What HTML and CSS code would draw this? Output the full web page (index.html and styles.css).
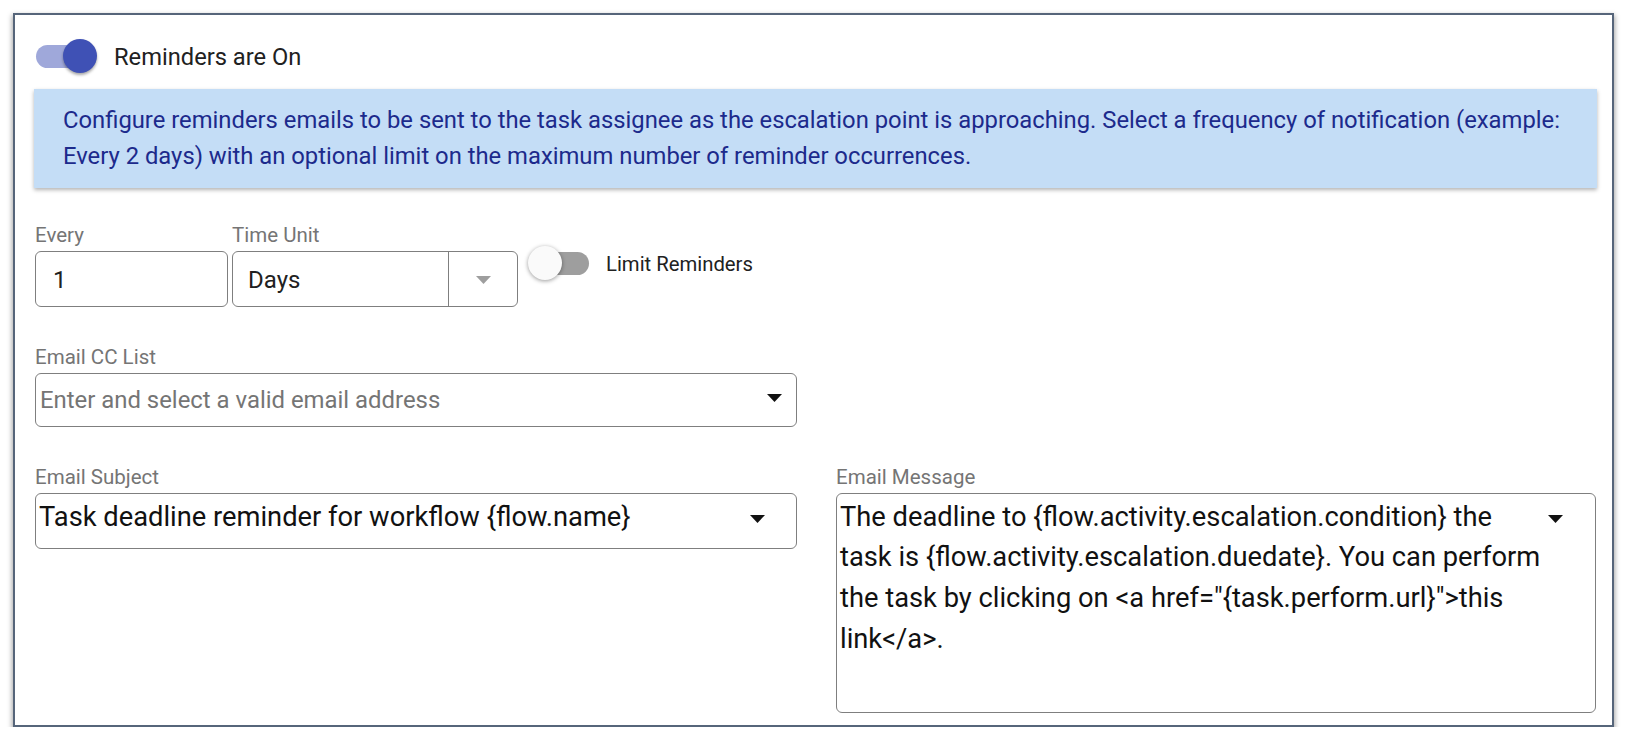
FILE: index.html
```html
<!DOCTYPE html>
<html>
<head>
<meta charset="utf-8">
<link rel="stylesheet" href="styles.css">
</head>
<body>
<div class="panel">
  <div class="master">
    <span class="switch switch-on"><span class="track"></span><span class="thumb"></span></span>
    <span class="master-label">Reminders are On</span>
  </div>
  <div class="info">Configure reminders emails to be sent to the task assignee as the escalation point is approaching. Select a frequency of notification (example:<br>Every 2 days) with an optional limit on the maximum number of reminder occurrences.</div>

  <div class="row-freq">
    <div class="field f-every">
      <div class="label">Every</div>
      <div class="box box-every">1</div>
    </div>
    <div class="field f-unit">
      <div class="label">Time Unit</div>
      <div class="box box-unit">
        <span class="unit-value">Days</span>
        <span class="unit-caret"><svg width="15" height="8" viewBox="0 0 15 8"><polygon points="0,0 15,0 7.5,8" fill="#9e9e9e"/></svg></span>
      </div>
    </div>
    <div class="limit">
      <span class="switch switch-off"><span class="track"></span><span class="thumb"></span></span>
      <span class="limit-label">Limit Reminders</span>
    </div>
  </div>

  <div class="field f-cc">
    <div class="label">Email CC List</div>
    <div class="box box-cc">
      <span class="placeholder">Enter and select a valid email address</span>
      <svg class="caret caret-cc" width="15" height="8" viewBox="0 0 15 8"><polygon points="0,0 15,0 7.5,8" fill="#111"/></svg>
    </div>
  </div>

  <div class="row-email">
    <div class="field f-subject">
      <div class="label">Email Subject</div>
      <div class="box box-text box-subject">
        <span class="text">Task deadline reminder for workflow {flow.name}</span>
        <svg class="caret caret-subject" width="15" height="8" viewBox="0 0 15 8"><polygon points="0,0 15,0 7.5,8" fill="#111"/></svg>
      </div>
    </div>
    <div class="field f-message">
      <div class="label">Email Message</div>
      <div class="box box-text box-message">
        <span class="text">The deadline to {flow.activity.escalation.condition} the<br>task is {flow.activity.escalation.duedate}. You can perform<br>the task by clicking on &lt;a href="{task.perform.url}"&gt;this<br>link&lt;/a&gt;.</span>
        <svg class="caret caret-message" width="15" height="8" viewBox="0 0 15 8"><polygon points="0,0 15,0 7.5,8" fill="#111"/></svg>
      </div>
    </div>
  </div>
</div>
</body>
</html>
```

FILE: styles.css
```css
* { box-sizing: border-box; }

body {
  margin: 0;
  background: #ffffff;
  font-family: Roboto, "Noto Sans", "Liberation Sans", sans-serif;
  color: #212121;
}

.panel {
  margin: 13px 0 0 13px;
  width: 1601px;
  border: 2px solid #56657a;
  background: #fff;
  box-shadow: 0 3px 5px 1px rgba(0, 0, 0, 0.35);
  padding: 0 15px 12px 20px;
}

/* master toggle */
.master {
  margin-top: 24px;
  height: 34px;
  display: flex;
  align-items: center;
}

.switch {
  position: relative;
  display: inline-block;
  width: 62px;
  height: 34px;
  flex: none;
}

.switch .track {
  position: absolute;
  top: 6px;
  height: 23px;
  border-radius: 12px;
}

.switch .thumb {
  position: absolute;
  top: 0;
  width: 34px;
  height: 34px;
  border-radius: 50%;
}

.switch-on .track { left: 1px; width: 56px; background: #9fa8da; }
.switch-on .thumb {
  left: 28px;
  background: #3f51b5;
  box-shadow: 0 2px 3px rgba(0, 0, 0, 0.35);
}

.switch-off .track { left: 8px; width: 53px; background: #9e9e9e; }
.switch-off .thumb {
  left: 0;
  background: #fafafa;
  box-shadow: 0 1px 4px rgba(0, 0, 0, 0.4);
}

.master-label {
  margin-left: 17px;
  margin-top: 2px;
  font-size: 23.7px;
  color: #212121;
}

/* info banner */
.info {
  margin-top: 16px;
  margin-left: -1px;
  height: 99px;
  background: #c4ddf6;
  color: #1c2a8c;
  font-size: 23.8px;
  line-height: 36px;
  padding: 13px 10px 0 29px;
  box-shadow: 0 2px 4px rgba(0, 0, 0, 0.3);
  white-space: nowrap;
}

/* fields */
.label {
  font-size: 20.5px;
  line-height: 24px;
  color: #757575;
  margin-bottom: 4px;
  white-space: nowrap;
}

.box {
  border: 1.5px solid #7f7f7f;
  border-radius: 6px;
  background: #fff;
}

.row-freq {
  margin-top: 35px;
  display: flex;
  align-items: flex-start;
}

.f-every { width: 193px; }
.f-unit { width: 286px; margin-left: 4px; }

.box-every {
  height: 56px;
  display: flex;
  align-items: center;
  padding: 1px 0 0 17px;
  font-size: 24px;
}

.box-unit {
  height: 56px;
  display: flex;
  align-items: stretch;
}

.unit-value {
  flex: 1;
  display: flex;
  align-items: center;
  padding: 1px 0 0 15px;
  font-size: 24px;
  border-right: 1.5px solid #7f7f7f;
}

.unit-caret {
  width: 68px;
  display: flex;
  align-items: center;
  justify-content: center;
  padding-top: 1px;
}

.limit {
  margin-top: 23px;
  margin-left: 10px;
  display: flex;
  align-items: flex-start;
}

.limit-label {
  margin-left: 16px;
  margin-top: 6px;
  font-size: 20.3px;
  line-height: 24px;
  color: #212121;
}

.f-cc {
  margin-top: 38px;
  width: 762px;
}

.box-cc {
  height: 54px;
  display: flex;
  align-items: center;
  padding-left: 4px;
}

.placeholder {
  flex: 1;
  font-size: 23.9px;
  color: #757575;
}

.caret { flex: none; display: block; }
.caret-cc { margin-right: 14px; margin-top: -5px; }

.row-email {
  margin-top: 38px;
  display: flex;
  align-items: flex-start;
  gap: 39px;
}

.f-subject { width: 762px; }
.f-message { width: 760px; }

.box-text {
  display: flex;
  align-items: flex-start;
  padding: 2.5px 0 0 3px;
}

.box-text .text {
  flex: 1;
  font-size: 27.3px;
  line-height: 40.9px;
  color: #111;
  white-space: nowrap;
}

.box-subject { height: 56px; }
.box-message { height: 220px; }

.caret-subject { margin: 18px 31px 0 0; }
.caret-message { margin: 18px 32px 0 0; }
```
